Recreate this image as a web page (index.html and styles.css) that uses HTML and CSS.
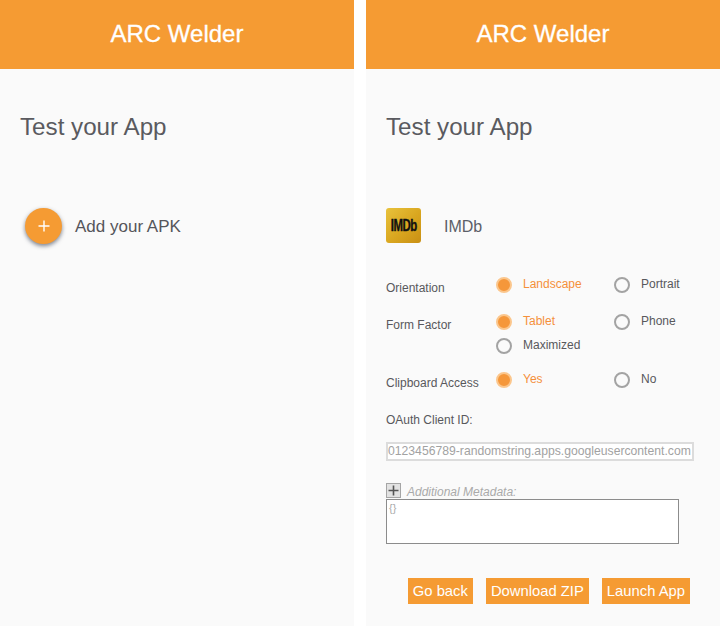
FILE: index.html
```html
<!DOCTYPE html>
<html lang="en">
<head>
    <meta charset="UTF-8">
    <title>ARC Welder</title>
    <link rel="stylesheet" href="styles.css">
</head>
<body>

    <div class="panel">
        <div class="header">ARC Welder</div>
        <div class="content">
            <h1>Test your App</h1>
            <div class="add-apk">
                <div class="fab">
                    <svg width="12" height="12" viewBox="0 0 12 12"><path d="M6 0.5v11M0.5 6h11" stroke="#fff" stroke-width="1.4" fill="none"/></svg>
                </div>
                <span class="nudge">Add your APK</span>
            </div>
        </div>
    </div>

    <div class="panel">
        <div class="header">ARC Welder</div>
        <div class="content">
            <h1>Test your App</h1>

            <div class="app-row">
                <div class="app-icon"><span>IMDb</span></div>
                <span class="nudge">IMDb</span>
            </div>

            <div class="option">
                <div class="option-label">Orientation</div>
                <div class="choices">
                    <div class="choice on"><i class="radio"></i>Landscape</div>
                    <div class="choice"><i class="radio"></i>Portrait</div>
                </div>
            </div>

            <div class="option">
                <div class="option-label">Form Factor</div>
                <div class="choices">
                    <div class="choice on"><i class="radio"></i>Tablet</div>
                    <div class="choice"><i class="radio"></i>Phone</div>
                    <div class="choice"><i class="radio"></i>Maximized</div>
                </div>
            </div>

            <div class="option">
                <div class="option-label">Clipboard Access</div>
                <div class="choices">
                    <div class="choice on"><i class="radio"></i>Yes</div>
                    <div class="choice"><i class="radio"></i>No</div>
                </div>
            </div>

            <div class="oauth-label">OAuth Client ID:</div>
            <div class="oauth-input">0123456789-randomstring.apps.googleusercontent.com</div>

            <div class="meta-label">
                <svg width="15" height="15" viewBox="0 0 15 15"><rect x="0.5" y="0.5" width="14" height="14" fill="#e2e2e2" stroke="#a5a5a5"/><path d="M7.5 2.5v10M2.5 7.5h10" stroke="#555" stroke-width="1.6" fill="none"/></svg>
                <em>Additional Metadata:</em>
            </div>
            <div class="meta-box">{}</div>

            <div class="buttons">
                <div class="btn">Go back</div>
                <div class="btn">Download ZIP</div>
                <div class="btn">Launch App</div>
            </div>
        </div>
    </div>

</body>
</html>
```

FILE: styles.css
```css
body {
    font-family: "Liberation Sans", Arial, sans-serif;
    display: flex;
    justify-content: space-between;
    height: 626px;
    background-color: #fff;
    margin: 0;
    overflow: hidden;
}
.panel {
    width: 354px;
    background-color: #fafafa;
}
.header {
    height: 69px;
    line-height: 67px;
    background-color: #f59b33;
    color: #fff;
    font-size: 24px;
    text-align: center;
    -webkit-text-stroke: 0.3px #fff;
}
.content {
    padding: 0 20px;
}
h1 {
    margin: 0;
    padding-top: 44px;
    height: 96px;
    box-sizing: border-box;
    font-size: 24.2px;
    line-height: 28px;
    font-weight: normal;
    color: #5a5a5f;
}
.nudge {
    padding-top: 2px;
}
.add-apk {
    display: flex;
    align-items: center;
    margin-top: 43px;
    padding-left: 5px;
    font-size: 17px;
    color: #55555a;
}
.fab {
    width: 37px;
    height: 36px;
    margin-right: 13px;
    border-radius: 50%;
    background-color: #f59b33;
    box-shadow: 0 2px 4px rgba(40, 50, 70, 0.6);
    display: flex;
    align-items: center;
    justify-content: center;
}
.app-row {
    display: flex;
    align-items: center;
    margin-top: 43px;
    margin-bottom: 34px;
    font-size: 16px;
    color: #5c5f68;
}
.app-icon {
    width: 35px;
    height: 35px;
    margin-right: 23px;
    border-radius: 3px;
    background: linear-gradient(135deg, #e8c23c, #d9a61f 55%, #c98f14);
    display: flex;
    align-items: center;
    justify-content: center;
}
.app-icon span {
    font-size: 12px;
    font-weight: bold;
    letter-spacing: -0.5px;
    color: #111;
    transform: scale(0.95, 1.35);
    -webkit-text-stroke: 0.3px #111;
}
.option {
    display: flex;
    margin-bottom: 18px;
    font-size: 12px;
    color: #58585c;
}
.option-label {
    width: 110px;
    padding-top: 3px;
    line-height: 16px;
}
.choices {
    display: grid;
    grid-template-columns: 118px 86px;
    row-gap: 8px;
}
.choice {
    display: flex;
    align-items: flex-start;
    height: 16px;
    line-height: 14px;
}
.choice .radio {
    flex: none;
    width: 16px;
    height: 16px;
    margin-right: 11px;
    box-sizing: border-box;
    border: 2px solid #a3a3a3;
    border-radius: 50%;
}
.choice.on {
    color: #f5903a;
}
.choice.on .radio {
    border-color: #fbc68c;
    background-color: #f5973a;
}
.oauth-label {
    margin-top: 22px;
    font-size: 12px;
    line-height: 14px;
    color: #58585c;
}
.oauth-input {
    width: 308px;
    height: 19px;
    margin-top: 15px;
    box-sizing: border-box;
    border: 2px solid #dcdcdc;
    background-color: #fff;
    font-size: 12.2px;
    line-height: 15px;
    white-space: nowrap;
    color: #a2a2a2;
}
.meta-label {
    display: flex;
    align-items: center;
    height: 15px;
    margin-top: 22px;
    font-size: 12px;
    color: #aaa;
}
.meta-label em {
    margin-left: 6px;
    padding-top: 2px;
}
.meta-box {
    width: 293px;
    height: 45px;
    margin-top: 1px;
    padding: 2px;
    box-sizing: border-box;
    border: 1px solid #8c8c8c;
    background-color: #fff;
    font-size: 11px;
    line-height: 13px;
    color: #aaa;
}
.buttons {
    display: flex;
    justify-content: flex-end;
    gap: 13px;
    width: 304px;
    margin-top: 34px;
}
.btn {
    height: 26px;
    line-height: 27px;
    padding: 0 5px;
    background-color: #f59b33;
    color: #fff;
    font-size: 14.8px;
}
```
